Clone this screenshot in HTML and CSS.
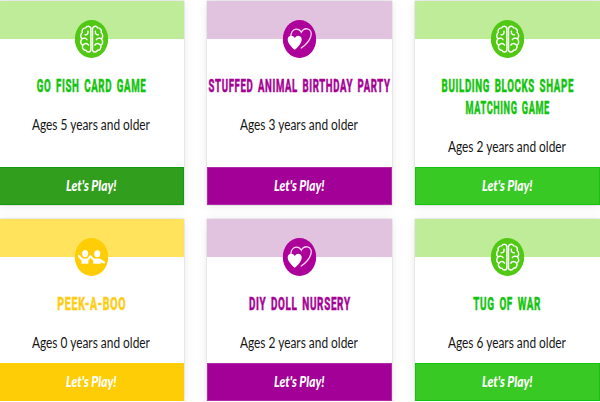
FILE: index.html
```html
<!DOCTYPE html>
<html lang="en">
<head>
<meta charset="utf-8">
<title>Games</title>
<link rel="stylesheet" href="styles.css">
</head>
<body>
<svg class="defs" aria-hidden="true">
  <symbol id="brain" viewBox="0 0 34 38">
    <ellipse cx="17" cy="19" rx="16.7" ry="19" fill="#50c814"/>
    <g fill="none" stroke="#fff" stroke-width="1.45" stroke-linecap="round" stroke-linejoin="round">
      <g id="lobe">
        <path d="M16.4 8.2C15.6 5.6 12.4 5.6 11.2 7.9C8.4 7.8 6.9 10.3 7.8 12.5C5.8 14 5.7 17.4 7.5 18.7C5.7 20.6 5.8 24.2 8 25.4C7.4 28.2 9.2 30.6 11.5 30.3C12.5 32.7 15.7 32.6 16.4 30.2Z"/>
        <path d="M13.5 11.2C14 13.8 12.5 15 10.6 14.8M7.5 18.7C9.2 17.8 11.8 18 12.6 19.7M8.5 25C10.2 23 12.8 22.9 14 25.2"/>
      </g>
      <use href="#lobe" transform="translate(34.4 0) scale(-1 1)"/>
    </g>
  </symbol>
  <symbol id="hearts" viewBox="0 0 34 38">
    <ellipse cx="17" cy="19" rx="16.7" ry="19" fill="#ad009b"/>
    <path d="M8.7 17.4C7.8 13.5 9.8 9.5 13.4 9.2C16 9 17.8 10.3 18.8 12.3C20 9.8 22 8.5 24.8 8.8C28.5 9.3 29.5 13.2 28.2 16.7C26.8 21 22.8 25.2 18.7 28" fill="none" stroke="#fbd8f6" stroke-width="1.3" stroke-linecap="round"/>
    <path d="M12.2 29.8C8.6 26.5 5.2 23 5.2 19.4C5.2 15.3 10.3 14.5 12.3 18C14.3 14.5 19.2 15.3 19.2 19.4C19.2 23 15.8 26.7 12.2 29.8Z" fill="#fff"/>
  </symbol>
  <symbol id="friends" viewBox="0 0 34 38">
    <ellipse cx="17" cy="19" rx="16.7" ry="19" fill="#ffcd05"/>
    <g fill="#fff">
      <ellipse cx="10.6" cy="15.6" rx="3" ry="3.5"/>
      <ellipse cx="22.8" cy="15.8" rx="3" ry="3.5"/>
      <path d="M7 25.7V22.8L3.6 18.7Q3 17 4.5 16.8L8.3 20.4H12.7L16 16.8L19.4 20.4H25L30.1 23.4Q31.2 25.4 29.3 25.6L26.3 24.4V25.7H18.8V22.7L16.1 19.7L13.8 22.8V25.7Z"/>
    </g>
  </symbol>
</svg>
<main class="games">
  <article class="card green dark">
    <div class="band"><svg class="icon"><use href="#brain"/></svg></div>
    <h2 class="title"><span>GO FISH CARD GAME</span></h2>
    <p class="ages"><span>Ages 5 years and older</span></p>
    <a class="play"><span>Let's Play!</span></a>
  </article>
  <article class="card purple">
    <div class="band"><svg class="icon"><use href="#hearts"/></svg></div>
    <h2 class="title"><span class="long">STUFFED ANIMAL BIRTHDAY PARTY</span></h2>
    <p class="ages"><span>Ages 3 years and older</span></p>
    <a class="play"><span>Let's Play!</span></a>
  </article>
  <article class="card green">
    <div class="band"><svg class="icon"><use href="#brain"/></svg></div>
    <h2 class="title"><span>BUILDING BLOCKS SHAPE</span><span class="tight">MATCHING GAME</span></h2>
    <p class="ages"><span>Ages 2 years and older</span></p>
    <a class="play"><span>Let's Play!</span></a>
  </article>
  <article class="card yellow">
    <div class="band"><svg class="icon"><use href="#friends"/></svg></div>
    <h2 class="title"><span class="wide">PEEK-A-BOO</span></h2>
    <p class="ages"><span>Ages 0 years and older</span></p>
    <a class="play"><span>Let's Play!</span></a>
  </article>
  <article class="card purple">
    <div class="band"><svg class="icon"><use href="#hearts"/></svg></div>
    <h2 class="title"><span class="roomy">DIY DOLL NURSERY</span></h2>
    <p class="ages"><span>Ages 2 years and older</span></p>
    <a class="play"><span>Let's Play!</span></a>
  </article>
  <article class="card green">
    <div class="band"><svg class="icon"><use href="#brain"/></svg></div>
    <h2 class="title"><span class="roomy">TUG OF WAR</span></h2>
    <p class="ages"><span>Ages 6 years and older</span></p>
    <a class="play"><span>Let's Play!</span></a>
  </article>
</main>
</body>
</html>
```
FILE: styles.css
```css
* { box-sizing: border-box; }
body { margin: 0; background: #fff; overflow: hidden; font-family: Lato, sans-serif; }
.defs { position: absolute; width: 0; height: 0; }
.games {
  display: grid;
  grid-template-columns: repeat(3, 184.4px);
  grid-template-rows: 204px 182px;
  gap: 14px 23.6px;
  width: 601px;
  margin-left: -0.8px;
  padding-top: 1.3px;
}
.card {
  display: flex;
  flex-direction: column;
  background: #fff;
  box-shadow: 0 0 1px rgba(0,0,0,.35), 0 1px 10px rgba(0,0,0,.09);
}
.green { --band: #beec98; --ink: #13c40d; --button: #39c925; --edge: #15c40c; }
.dark { --button: #319e1e; --edge: #109c0c; }
.purple { --band: #e1c2df; --ink: #a50094; --button: #a20096; --edge: #b02ba5; }
.yellow { --band: #ffe35c; --ink: #ffcc14; --button: #ffcd05; --edge: #ffcd05; }
.band {
  display: flex;
  justify-content: center;
  height: 38px;
  padding-top: 18.7px;
  background: var(--band);
}
.icon { flex: none; width: 34px; height: 38px; transform: translateX(.5px); }
.title {
  display: flex;
  flex-direction: column;
  align-items: center;
  margin: 36.2px 0 0;
  font: 700 19px/22px Roboto, sans-serif;
  color: var(--ink);
}
.title span {
  white-space: nowrap;
  letter-spacing: 1.3px;
  word-spacing: 3px;
  -webkit-text-stroke: .6px var(--ink);
  transform: scaleX(.51);
}
.title .long { transform: scaleX(.504); }
.title .tight { transform: scaleX(.48); }
.title .roomy { transform: scaleX(.52); }
.title .wide { transform: scaleX(.56); }
.ages {
  margin: 17.5px 0 0;
  font-size: 14.5px;
  line-height: 20px;
  color: #151515;
  text-align: center;
  white-space: nowrap;
}
.ages span { display: inline-block; transform: scaleX(.82); }
.play {
  display: flex;
  align-items: center;
  justify-content: center;
  height: 38.7px;
  margin-top: auto;
  border: 1px solid var(--edge);
  background: var(--button);
  color: #fff;
  font-size: 14.5px;
  font-style: italic;
  font-weight: 900;
}
.play span { transform: translateX(-.5px) scaleX(.82); white-space: nowrap; }
```
